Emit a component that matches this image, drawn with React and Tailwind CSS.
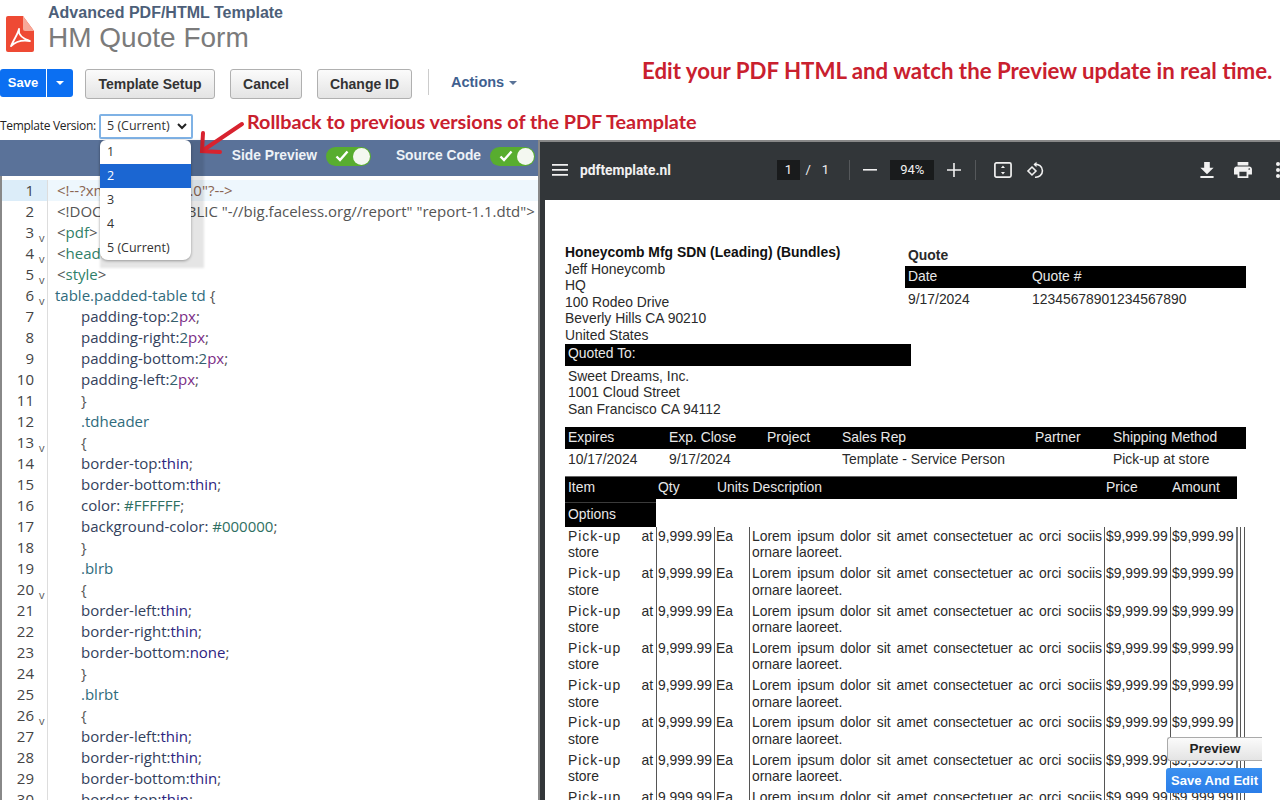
import React from 'react';

const C = {
  prop: 'text-[#33415c]',
  num: 'text-[#35606b]',
  unit: 'text-[#7b2d86]',
  val: 'text-[#2c2480]',
  sel: 'text-[#2f6b7c]',
  tag: 'text-[#2f7f68]',
  pun: 'text-[#555555]',
  com: 'text-[#8a6552]',
  hex: 'text-[#2f6f62]',
};

const px = (name) => [
  [name + ':', C.prop],
  ['2', C.num],
  ['px', C.unit],
  [';', C.pun],
];
const thin = (name, v = 'thin') => [
  [name + ':', C.prop],
  [v, C.val],
  [';', C.pun],
];

const codeLines = [
  { parts: [['<!--?xml version="1.0"?-->', C.com]], indent: 1 },
  { parts: [['<!DOCTYPE pdf PUBLIC "-//big.faceless.org//report" "report-1.1.dtd">', C.pun]], indent: 1 },
  { parts: [['<', C.pun], ['pdf', C.tag], ['>', C.pun]], indent: 1, fold: true },
  { parts: [['<', C.pun], ['head', C.tag], ['>', C.pun]], indent: 1, fold: true },
  { parts: [['<', C.pun], ['style', C.tag], ['>', C.pun]], indent: 1, fold: true },
  { parts: [['table.padded-table td', C.sel], [' {', C.pun]], indent: 0, fold: true },
  { parts: px('padding-top'), indent: 2 },
  { parts: px('padding-right'), indent: 2 },
  { parts: px('padding-bottom'), indent: 2 },
  { parts: px('padding-left'), indent: 2 },
  { parts: [['}', C.pun]], indent: 2 },
  { parts: [['.tdheader', C.sel]], indent: 2 },
  { parts: [['{', C.pun]], indent: 2, fold: true },
  { parts: thin('border-top'), indent: 2 },
  { parts: thin('border-bottom'), indent: 2 },
  { parts: [['color: ', C.prop], ['#FFFFFF', C.hex], [';', C.pun]], indent: 2 },
  { parts: [['background-color: ', C.prop], ['#000000', C.hex], [';', C.pun]], indent: 2 },
  { parts: [['}', C.pun]], indent: 2 },
  { parts: [['.blrb', C.sel]], indent: 2 },
  { parts: [['{', C.pun]], indent: 2, fold: true },
  { parts: thin('border-left'), indent: 2 },
  { parts: thin('border-right'), indent: 2 },
  { parts: thin('border-bottom', 'none'), indent: 2 },
  { parts: [['}', C.pun]], indent: 2 },
  { parts: [['.blrbt', C.sel]], indent: 2 },
  { parts: [['{', C.pun]], indent: 2, fold: true },
  { parts: thin('border-left'), indent: 2 },
  { parts: thin('border-right'), indent: 2 },
  { parts: thin('border-bottom'), indent: 2 },
  { parts: thin('border-top'), indent: 2 },
];

const indentClass = ['pl-[7px]', 'pl-[9px]', 'pl-[33px]'];

const CodeLine = ({ n, line }) => (
  <div className={`flex h-[21px] items-center ${n === 1 ? 'bg-[#eef7fd]' : ''}`}>
    <div className={`relative h-full w-[46px] shrink-0 border-r border-[#dddddd] ${n === 1 ? 'bg-[#dcedf9]' : ''}`}>
      <span className="absolute right-[13px] top-0 leading-[21px] text-[#444444]">{n}</span>
      {line.fold && <span className="absolute left-[37px] top-[5px] text-[11px] leading-[21px] text-[#555555]">v</span>}
    </div>
    <div className={`whitespace-pre ${indentClass[line.indent]}`}>
      {line.parts.map(([t, c], i) => (
        <span key={i} className={c}>{t}</span>
      ))}
    </div>
  </div>
);

const GrayButton = ({ children, className = '' }) => (
  <button className={`h-[30px] rounded-[3px] border border-[#b0b0b0] bg-gradient-to-b from-[#fbfbfb] to-[#e4e4e4] text-[14px] font-bold text-[#333333] ${className}`}>
    {children}
  </button>
);

const Toggle = () => (
  <div className="flex h-[19px] w-[45px] items-center justify-between rounded-full bg-[#58ad2f] pl-[9px] pr-[1px]">
    <svg width="14" height="12" viewBox="0 0 14 12" fill="none" stroke="#ffffff" strokeWidth="2.4">
      <path d="M1.5 6.5 5 10l7.5-8.5" />
    </svg>
    <div className="h-[17px] w-[17px] rounded-full bg-[#f4f8f0]" />
  </div>
);

const PdfIcon = () => (
  <svg width="28" height="36" viewBox="0 0 28 36" className="shrink-0">
    <path d="M2 0h15l11 15v19a2 2 0 0 1-2 2H2a2 2 0 0 1-2-2V2a2 2 0 0 1 2-2z" fill="#ee4a34" />
    <path d="M17 0l11 15H19a2 2 0 0 1-2-2z" fill="#f7a999" />
    <path d="M13 13c-1 5 2 9 11 12-6-1-14 0-19 5 3-7 7-12 8-17z" fill="none" stroke="#ffffff" strokeWidth="1.8" strokeLinejoin="round" />
  </svg>
);

const Caret = ({ className = '' }) => <span className={`inline-block h-0 w-0 border-x-[4px] border-t-[4px] border-x-transparent ${className}`} />;

const Divider = () => <div className="h-[20px] w-px bg-[#55585b]" />;

const PdfToolbar = () => (
  <div className="flex h-[58px] shrink-0 items-center bg-[#323639] pb-[2px] font-['Roboto',sans-serif] text-[#f1f1f1]">
    <svg width="16" height="12" viewBox="0 0 16 12" fill="#f1f1f1" className="ml-[12px]">
      <path d="M0 0h16v1.8H0zM0 5h16v1.8H0zM0 10h16v1.8H0z" />
    </svg>
    <span className="ml-[12px] w-[197px] text-[13.800px] font-bold">pdftemplate.nl</span>
    <div className="flex h-[20px] w-[24px] items-center justify-center bg-[#191b1c] text-[13px]">1</div>
    <span className="ml-[5px] w-[44px] text-[13px] tracking-[1.5px]">/&nbsp;&nbsp;1</span>
    <Divider />
    <svg width="14" height="14" viewBox="0 0 14 14" fill="#f1f1f1" className="ml-[13px]"><path d="M0 6h14v1.6H0z" /></svg>
    <div className="ml-[13px] flex h-[20px] w-[44px] items-center justify-center bg-[#191b1c] text-[13px]">94%</div>
    <svg width="14" height="14" viewBox="0 0 14 14" fill="#f1f1f1" className="ml-[13px]"><path d="M0 6.2h14v1.6H0zM6.2 0h1.6v14H6.2z" /></svg>
    <div className="ml-[14px]"><Divider /></div>
    <svg width="18" height="16" viewBox="0 0 18 16" fill="none" className="ml-[18px]">
      <rect x="0.9" y="0.9" width="16.2" height="14.2" rx="1.5" stroke="#f1f1f1" strokeWidth="1.7" />
      <path d="M9 3.4 11 6H7zM9 12.6 7 10h4z" fill="#f1f1f1" />
    </svg>
    <svg width="18" height="18" viewBox="0 0 18 18" fill="none" stroke="#f1f1f1" strokeWidth="1.6" className="ml-[14px]">
      <path d="M6 6 10 10 6 14 2 10z" />
      <path d="M8.5 3.5c4-.8 8 2 8 6.2 0 4-3.500 7-7.500 6.500" />
      <path d="M10.500 0.800 7.500 3.500l3 2.700" fill="#f1f1f1" stroke="none" />
    </svg>
    <svg width="14" height="16" viewBox="5 3 14 17" fill="#f1f1f1" className="ml-[156px]">
      <path d="M19 9h-4V3H9v6H5l7 7 7-7zM5 18v2h14v-2H5z" />
    </svg>
    <svg width="18" height="18" viewBox="2 3 20 18" fill="#f1f1f1" className="ml-[20px]">
      <path d="M19 8H5c-1.660 0-3 1.340-3 3v6h4v4h12v-4h4v-6c0-1.660-1.340-3-3-3zm-3 11H8v-5h8v5zm3-7c-.550 0-1-.450-1-1s.450-1 1-1 1 .450 1 1-.450 1-1 1zm-1-9H6v4h12V3z" />
    </svg>
    <div className="ml-[24px] flex shrink-0 flex-col gap-[2px]">
      <div className="h-[4px] w-[4px] rounded-full bg-[#f1f1f1]" />
      <div className="h-[4px] w-[4px] rounded-full bg-[#f1f1f1]" />
      <div className="h-[4px] w-[4px] rounded-full bg-[#f1f1f1]" />
    </div>
  </div>
);

const ItemRow = () => (
  <div className="grid h-[37.33px] grid-cols-[91px_58px_35px_355px_66px_66px_4px_5px] leading-[16.6px]">
    <div className="text-justify pl-[3px] pr-[3px] pt-[0.5px]"><span className="tracking-[1px]">Pick-up</span> at store</div>
    <div className="border-l border-[#555555] pl-[1px] pt-[0.5px]">9,999.99</div>
    <div className="border-l border-[#555555] pl-[1px] pt-[0.5px]">Ea</div>
    <div className="text-justify border-l border-[#555555] pl-[2px] pr-[2px] pt-[0.5px]">Lorem ipsum dolor sit amet consectetuer ac orci sociis ornare laoreet.</div>
    <div className="whitespace-nowrap border-l border-[#555555] pl-[1px] pt-[0.5px]">$9,999.99</div>
    <div className="whitespace-nowrap border-l border-[#555555] pl-[1px] pt-[0.5px]">$9,999.99</div>
    <div className="border-l-2 border-[#777777]" />
    <div className="border-x border-[#555555]" />
  </div>
);

const BlackBar = ({ children, className = '' }) => (
  <div className={`flex items-center bg-black pb-[2px] text-[#e8e8e8] ${className}`}>{children}</div>
);

const PdfPage = () => (
  <div className="h-full overflow-hidden bg-white pl-[20px] pt-[44px] font-['Liberation_Sans',sans-serif] text-[13.900px] leading-[16.6px] text-[#2a2a2a]">
    <div className="flex">
      <div className="w-[346px] shrink-0">
        <div className="font-bold text-[#111111]">Honeycomb Mfg SDN (Leading) (Bundles)</div>
        <div>Jeff Honeycomb</div>
        <div>HQ</div>
        <div>100 Rodeo Drive</div>
        <div>Beverly Hills CA 90210</div>
        <div>United States</div>
        <BlackBar className="h-[22px] pl-[3px]">Quoted To:</BlackBar>
        <div className="pl-[3px] pt-[2px]">
          <div>Sweet Dreams, Inc.</div>
          <div>1001 Cloud Street</div>
          <div>San Francisco CA 94112</div>
        </div>
      </div>
      <div className="-ml-[6px] w-[341px] shrink-0">
        <div className="h-[22px] pl-[3px] pt-[3px] font-bold">Quote</div>
        <BlackBar className="h-[22px] pl-[3px]">
          <span className="w-[124px]">Date</span>
          <span>Quote #</span>
        </BlackBar>
        <div className="flex pl-[3px] pt-[3px]">
          <span className="w-[124px]">9/17/2024</span>
          <span>12345678901234567890</span>
        </div>
      </div>
    </div>
    <BlackBar className="mt-[10px] h-[22px] w-[681px] pl-[3px]">
      <span className="w-[101px]">Expires</span>
      <span className="w-[98px]">Exp. Close</span>
      <span className="w-[75px]">Project</span>
      <span className="w-[193px]">Sales Rep</span>
      <span className="w-[78px]">Partner</span>
      <span>Shipping Method</span>
    </BlackBar>
    <div className="flex h-[27px] items-start pl-[3px] pt-[2px]">
      <span className="w-[101px]">10/17/2024</span>
      <span className="w-[173px]">9/17/2024</span>
      <span className="w-[271px]">Template - Service Person</span>
      <span>Pick-up at store</span>
    </div>
    <BlackBar className="h-[23px] w-[672px] border-t border-[#666666] pl-[3px]">
      <span className="w-[90px]">Item</span>
      <span className="w-[59px]">Qty</span>
      <span className="w-[389px]">Units Description</span>
      <span className="w-[66px]">Price</span>
      <span>Amount</span>
    </BlackBar>
    <div className="h-[4px] w-[91px] border-b border-[#3a3a3a] bg-black" />
    <BlackBar className="h-[24px] w-[91px] pl-[3px]">Options</BlackBar>
    <div className="w-[681px]">
      {Array.from({ length: 8 }, (_, i) => <ItemRow key={i} />)}
    </div>
  </div>
);

export default function App() {
  return (
    <div className="relative h-[800px] w-[1280px] overflow-hidden bg-white font-['Liberation_Sans',sans-serif]">
      <header className="flex h-[69px] items-start pl-[6px]">
        <div className="mt-[16px]"><PdfIcon /></div>
        <div className="ml-[14px] pt-[4px]">
          <div className="text-[16px] font-bold leading-[17px] text-[#4d5f79]">Advanced PDF/HTML Template</div>
          <div className="pt-[1px] text-[28px] leading-[32px] text-[#7b7b7b]">HM Quote Form</div>
        </div>
      </header>

      <div className="flex h-[43px] items-start">
        <div className="flex h-[28px] w-[73px] items-center rounded-[3px] bg-[#0b6ff2] text-white">
          <span className="w-[47px] border-r border-white text-center text-[13px] font-bold leading-[28px]">Save</span>
          <Caret className="ml-[9px] border-t-white" />
        </div>
        <GrayButton className="ml-[12px] w-[130px]">Template Setup</GrayButton>
        <GrayButton className="ml-[15px] w-[72px]">Cancel</GrayButton>
        <GrayButton className="ml-[15px] w-[95px]">Change ID</GrayButton>
        <div className="ml-[16px] h-[26px] w-px bg-[#cccccc]" />
        <div className="ml-[22px] flex h-[28px] items-center gap-[5px] text-[14.5px] font-bold text-[#40608f]">
          Actions <Caret className="border-t-[#5a7398]" />
        </div>
      </div>

      <div className="flex h-[28px] items-center">
        <span className="w-[99px] whitespace-nowrap font-['Open_Sans',sans-serif] text-[12px] tracking-[-0.3px] text-[#222222]">Template Version:</span>
        <div className="flex h-[25px] w-[94px] items-center justify-between rounded-[2px] border-2 border-[#7fb2e5] pl-[6px] pr-[4px] font-['Open_Sans',sans-serif] text-[12.500px] text-[#333333]">
          5 (Current)
          <svg width="10" height="7" viewBox="0 0 10 7" fill="none" stroke="#222222" strokeWidth="2"><path d="M1 1l4 4 4-4" /></svg>
        </div>
      </div>

      <div className="flex h-[660px]">
        <section className="flex w-[538px] shrink-0 flex-col">
          <div className="flex h-[36px] shrink-0 items-center justify-end bg-[#5a7299] pb-[4px] pr-[3px] text-[13.800px] font-bold text-[#eef2f7]">
            <span className="mr-[9px]">Side Preview</span>
            <Toggle />
            <span className="ml-[25px] mr-[9px]">Source Code</span>
            <Toggle />
          </div>
          <div className="flex-1 overflow-hidden border-l-2 border-[#888888] pt-[4px] font-['Open_Sans',sans-serif] text-[15px]">
            {codeLines.map((line, i) => (
              <CodeLine key={i} n={i + 1} line={line} />
            ))}
          </div>
        </section>

        <section className="flex min-w-0 flex-1 flex-col overflow-hidden border-l-2 border-t-2 border-[#888888] bg-[#323639]">
          <PdfToolbar />
          <div className="min-h-0 flex-1 pl-[5px]">
            <PdfPage />
          </div>
        </section>
      </div>

      {/* red notes laid over the screenshot */}
      <div className="absolute left-[642px] top-[57px] whitespace-nowrap font-['Lato',sans-serif] text-[22.250px] font-bold leading-[28px] text-[#c9202e]">
        Edit your PDF HTML and watch the Preview update in real time.
      </div>
      <div className="absolute left-[247px] top-[108px] whitespace-nowrap font-['Lato',sans-serif] text-[19.800px] font-bold leading-[26px] text-[#c9202e]">
        Rollback to previous versions of the PDF Teamplate
      </div>
      <svg width="52" height="40" viewBox="0 0 52 40" fill="none" stroke="#d8232f" strokeWidth="4" strokeLinecap="round" className="absolute left-[197px] top-[118px]">
        <path d="M45 6 5 33M6 15l-1 18 18 1" />
      </svg>

      {/* open select menu */}
      <div className="absolute left-[100px] top-[140px] h-[128px] w-[104px] bg-black/10 blur-[1px]" />
      <div className="absolute left-[100px] top-[140px] w-[91px] overflow-hidden rounded-b-[8px] rounded-t-[6px] bg-white font-['Open_Sans',sans-serif] text-[12.500px] text-[#333333] shadow-[0_1px_3px_rgba(0,0,0,0.35)]">
        {['1', '2', '3', '4', '5 (Current)'].map((v) => (
          <div key={v} className={`h-[24px] pl-[7px] leading-[24px] ${v === '2' ? 'bg-[#1b66d2] text-white' : ''}`}>{v}</div>
        ))}
      </div>

      {/* floating buttons */}
      <button className="absolute left-[1167px] top-[737px] h-[24px] w-[95px] rounded-l-[3px] border border-r-0 border-[#aaaaaa] bg-gradient-to-b from-[#fbfbfb] to-[#e4e4e4] text-[13.500px] font-bold text-[#222222]">
        Preview
      </button>
      <button className="absolute left-[1166px] top-[768px] h-[25px] w-[96px] rounded-l-[3px] bg-gradient-to-b from-[#3a90f0] to-[#2a7de8] pl-[1px] text-[13px] font-bold text-white">
        Save And Edit
      </button>
    </div>
  );
}
